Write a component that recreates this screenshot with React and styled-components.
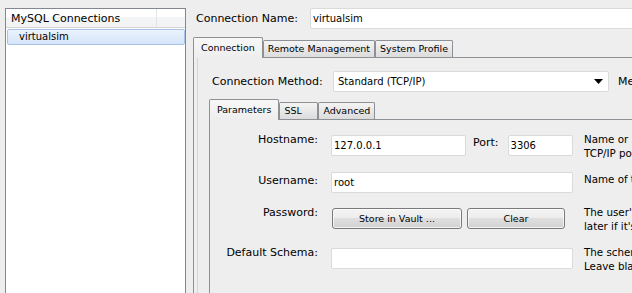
import React from "react";
import styled, { createGlobalStyle } from "styled-components";

const Global = createGlobalStyle`
  html, body { margin: 0; padding: 0; background: #eeeeee; overflow: hidden; }
  body { font-family: "DejaVu Sans", Verdana, sans-serif; font-size: 11px; color: #000; }
  * { box-sizing: border-box; }
`;

const Window = styled.div`
  width: 632px;
  height: 293px;
  overflow: hidden;
  display: flex;
  align-items: flex-start;
  padding: 8px 0 0 5px;
  background: #eeeeee;
`;

/* ---------- sidebar ---------- */
const Sidebar = styled.div`
  flex: none;
  width: 181px;
  height: 320px;
  background: #ffffff;
  border: 1px solid #828790;
  display: flex;
  flex-direction: column;
`;

const ListHeader = styled.div`
  display: flex;
  height: 19px;
  border-bottom: 1px solid #d5d5d5;
  background: linear-gradient(#ffffff 0%, #ffffff 45%, #f4f5f7 45%, #f2f3f5 100%);
`;

const HeaderCell = styled.div`
  width: ${(p) => p.$w}px;
  padding-left: 5px;
  line-height: 19px;
  font-size: 11px;
  white-space: nowrap;
  border-right: 1px solid #e2e4e7;
`;

const ListItem = styled.div`
  margin: 1px 0 0 1px;
  height: 16px;
  padding-left: 11px;
  line-height: 14px;
  font-size: 10px;
  border: 1px solid ${(p) => (p.$selected ? "#a8c3e6" : "transparent")};
  border-radius: 2px;
  background: ${(p) =>
    p.$selected ? "linear-gradient(#eaf2fd, #d5e5f9)" : "transparent"};
`;

/* ---------- main ---------- */
const Main = styled.div`
  flex: none;
  width: 640px;
  margin-left: 7px;
  display: flex;
  flex-direction: column;
`;

const NameRow = styled.div`
  display: flex;
  align-items: center;
  height: 21px;
  padding-left: 3px;
`;

const RowLabel = styled.div`
  flex: none;
  width: ${(p) => p.$w}px;
  font-size: 11px;
  white-space: nowrap;
`;

const TextInput = styled.input`
  flex: none;
  width: ${(p) => p.$w}px;
  height: 21px;
  margin: 0;
  padding: 0 2px;
  border: 1px solid #dadada;
  border-radius: 2px;
  background: #ffffff;
  font-family: inherit;
  font-size: 10px;
  color: #000;
  outline: none;
`;

const TabStrip = styled.div`
  display: flex;
  align-items: flex-end;
  position: relative;
  z-index: 1;
  margin-top: ${(p) => p.$top}px;
`;

const Tab = styled.div`
  flex: none;
  min-width: 39px;
  height: ${(p) => (p.$active ? 21 : 17)}px;
  margin-bottom: ${(p) => (p.$active ? -1 : 0)}px;
  padding: 0 ${(p) => (p.$active ? 7 : 4)}px;
  border: 1px solid #8d9094;
  border-bottom: none;
  border-radius: 2px 2px 0 0;
  font-size: 9.5px;
  line-height: ${(p) => (p.$active ? 19 : 16)}px;
  white-space: nowrap;
  background: ${(p) =>
    p.$active ? "linear-gradient(#f7f7f7, #eeeeee)" : "linear-gradient(#f4f4f4, #dcdcdc)"};
`;

const TabPanel = styled.div`
  border-top: 1px solid #8d9094;
  border-left: 1px solid #8d9094;
  background: #eeeeee;
  padding-left: 3px;
`;

const PanelBody = styled.div`
  border-left: 1px solid #d6d6d6;
  padding: 13px 0 0 11px;
  min-height: 240px;
`;

const MethodRow = styled.div`
  display: flex;
  align-items: center;
  height: 21px;
  padding-left: 3px;
`;

const Select = styled.div`
  flex: none;
  width: 276px;
  height: 21px;
  display: flex;
  align-items: center;
  justify-content: space-between;
  padding: 0 5px 0 4px;
  border: 1px solid #dadada;
  border-radius: 2px;
  background: #ffffff;
  font-size: 10px;
`;

const SideNote = styled.div`
  margin-left: 9px;
  font-size: 11px;
  white-space: nowrap;
`;

const InnerPanel = styled.div`
  border-top: 1px solid #8d9094;
  border-left: 1px solid #8d9094;
  padding-top: 15px;
  min-height: 180px;
`;

const FormGrid = styled.div`
  display: grid;
  grid-template-columns: 108px 242px max-content;
  grid-template-rows: 37px 36px 40px auto;
  column-gap: 13px;
  align-items: start;
`;

const FieldLabel = styled.div`
  margin-top: ${(p) => p.$dy}px;
  text-align: right;
  font-size: 11px;
  line-height: 13px;
  white-space: nowrap;
`;

const FieldGroup = styled.div`
  display: flex;
  align-items: flex-start;
`;

const PortLabel = styled.div`
  margin: 1px 9px 0 7px;
  font-size: 11px;
  line-height: 13px;
`;

const Help = styled.div`
  margin: ${(p) => p.$dy}px 0 0 -2px;
  font-size: 10.3px;
  line-height: 14px;
  white-space: nowrap;
`;

const PushButton = styled.button`
  flex: none;
  width: ${(p) => p.$w}px;
  height: 21px;
  margin: 0 0 0 ${(p) => p.$ml}px;
  padding: 0;
  border: 1px solid #7a7a7a;
  border-radius: 3px;
  background: linear-gradient(#f4f4f4 0%, #ececec 50%, #dfdfdf 50%, #d2d2d2 100%);
  box-shadow: inset 0 0 0 1px rgba(255, 255, 255, 0.7);
  font-family: inherit;
  font-size: 9.5px;
  color: #000;
`;

const Arrow = () => (
  <svg width="9" height="5" viewBox="0 0 9 5">
    <path d="M0 0H9L4.5 5Z" fill="#000" />
  </svg>
);

export default function App() {
  return (
    <>
      <Global />
      <Window>
        <Sidebar>
          <ListHeader>
            <HeaderCell $w={151}>MySQL Connections</HeaderCell>
          </ListHeader>
          <ListItem $selected>virtualsim</ListItem>
        </Sidebar>

        <Main>
          <NameRow>
            <RowLabel $w={114}>Connection Name:</RowLabel>
            <TextInput $w={400} defaultValue="virtualsim" readOnly />
          </NameRow>

          <TabStrip $top={8}>
            <Tab $active>Connection</Tab>
            <Tab>Remote Management</Tab>
            <Tab>System Profile</Tab>
          </TabStrip>
          <TabPanel>
            <PanelBody>
              <MethodRow>
                <RowLabel $w={121}>Connection Method:</RowLabel>
                <Select>
                  <span>Standard (TCP/IP)</span>
                  <Arrow />
                </Select>
                <SideNote>Method to use to connect to the RDBMS</SideNote>
              </MethodRow>

              <TabStrip $top={7}>
                <Tab $active>Parameters</Tab>
                <Tab>SSL</Tab>
                <Tab>Advanced</Tab>
              </TabStrip>
              <InnerPanel>
                <FormGrid>
                  <FieldLabel $dy={-2}>Hostname:</FieldLabel>
                  <FieldGroup>
                    <TextInput $w={135} defaultValue="127.0.0.1" readOnly />
                    <PortLabel>Port:</PortLabel>
                    <TextInput $w={65} defaultValue="3306" readOnly />
                  </FieldGroup>
                  <Help $dy={-3}>
                    Name or IP address of the server host - and
                    <br />
                    TCP/IP port.
                  </Help>

                  <FieldLabel $dy={2}>Username:</FieldLabel>
                  <TextInput $w={242} defaultValue="root" readOnly />
                  <Help $dy={0}>Name of the user to connect with.</Help>

                  <FieldLabel $dy={-2}>Password:</FieldLabel>
                  <FieldGroup>
                    <PushButton $w={130} $ml={1}>Store in Vault ...</PushButton>
                    <PushButton $w={98} $ml={5}>Clear</PushButton>
                  </FieldGroup>
                  <Help $dy={-3}>
                    The user's password. Will be requested
                    <br />
                    later if it's not set.
                  </Help>

                  <FieldLabel $dy={-2}>Default Schema:</FieldLabel>
                  <TextInput $w={242} defaultValue="" readOnly />
                  <Help $dy={-3}>
                    The schema to use as default schema.
                    <br />
                    Leave blank to select it later.
                  </Help>
                </FormGrid>
              </InnerPanel>
            </PanelBody>
          </TabPanel>
        </Main>
      </Window>
    </>
  );
}
